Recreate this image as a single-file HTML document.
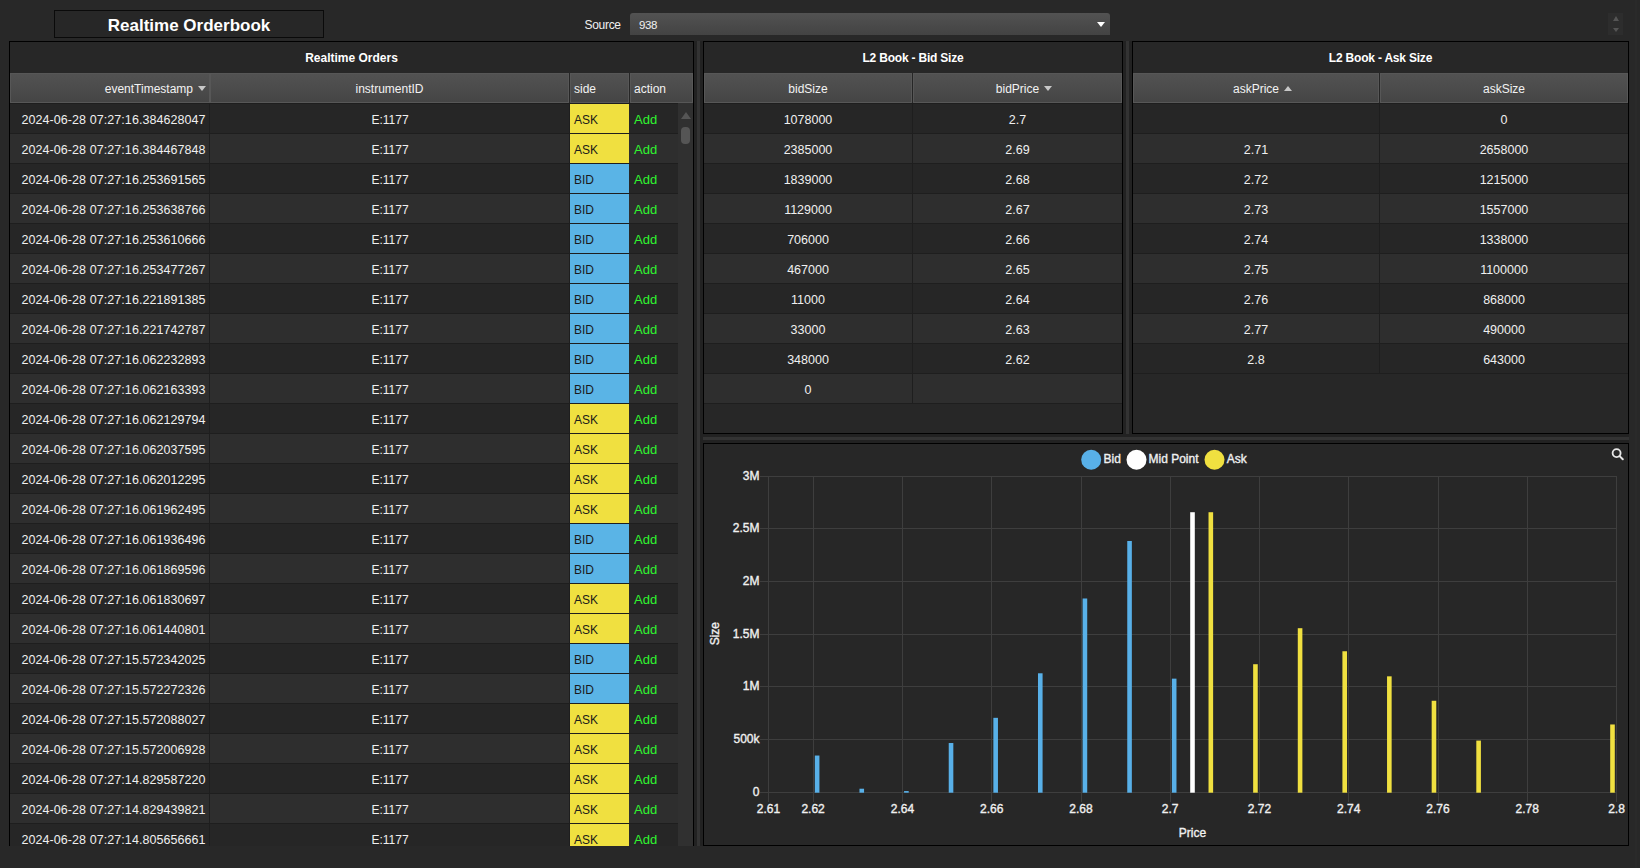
<!DOCTYPE html><html><head><meta charset="utf-8"><style>*{margin:0;padding:0;box-sizing:border-box}
html,body{width:1640px;height:868px;overflow:hidden;background:#282828;font-family:"Liberation Sans",sans-serif;color:#f2f2f2;position:relative}
div,i{position:absolute;display:block}
i{font-style:normal}
.titlebox{left:54px;top:10px;width:270px;height:28px;border:1px solid #0a0a0a;background:#272727;text-align:center;font-weight:bold;font-size:17px;line-height:26px;color:#fff}
.titlebox span{position:relative;top:2px}
.srclabel{left:584.5px;top:16px;font-size:12px;line-height:18px;color:#f0f0f0;letter-spacing:-0.3px}
.dropdown{left:630px;top:13px;width:480px;height:22px;border-radius:3px 3px 0 0;background:linear-gradient(#525252,#434343)}
.dropdown span{position:absolute;left:9px;top:4px;font-size:11.5px;line-height:16px;color:#f0f0f0;letter-spacing:-0.4px}
.ddarrow{left:467px;top:9px;width:0;height:0;border-left:4px solid transparent;border-right:4px solid transparent;border-top:5px solid #fff}
.spinner{left:1608px;top:13px;width:15px;height:22px;background:#2d2d2d}
.sup{left:4.5px;top:3px;width:0;height:0;border-left:3.5px solid transparent;border-right:3.5px solid transparent;border-bottom:5px solid #555}
.sdn{left:4.5px;top:15px;width:0;height:0;border-left:3.5px solid transparent;border-right:3.5px solid transparent;border-top:4px solid #555}
.farline{left:1635px;top:0;width:2px;height:868px;background:#2a2a2a}
.vstrip{width:3px;background:#333}
.hstrip{height:3px;background:#333}
.panel{border:1px solid #000;background:#272727;overflow:hidden;box-sizing:content-box}
.ptitle{left:0;top:0;width:100%;height:31px;text-align:center;font-weight:bold;font-size:12px;line-height:32px;color:#fff}
.hdr{left:0;width:100%;height:30px;background:#262626}
.hc{top:0;height:30px;border:1px solid #575757;background:linear-gradient(#525252,#454545);font-size:12px;line-height:31px;color:#f2f2f2;white-space:nowrap}
.hc.c{text-align:center}
.hc.l{text-align:left;padding-left:3px}
.hc span{position:relative}
.body{left:0;height:1000px}
.row{left:0;width:100%;height:30px;border-top:1px solid #1e1e1e}
.row.odd{background:#262626}
.row.even{background:#2e2e2e}
.cell{top:0;height:29px;font-size:12.5px;line-height:32px;white-space:nowrap;color:#f0f0f0}
.cc{text-align:center;font-size:12.5px}
.ts{left:0;width:200px;padding-left:11.5px;letter-spacing:0.07px}
.inst{left:201px;width:359px;text-align:center;font-size:12px}
.side{left:560px;width:59px;padding-left:4px;color:#1a1a1a;font-size:12px}
.side.ask{background:#f0e040}
.side.bid{background:#5ab4e6}
.act{left:620px;width:48px;padding-left:4px;color:#30f530;font-size:13px}
.ts,.inst{border-right:1px solid #1e1e1e}
.vscroll{left:668px;top:61px;width:15px;height:800px;background:#303030}
.sbup{left:2.5px;top:9px;width:0;height:0;border-left:5px solid transparent;border-right:5px solid transparent;border-bottom:7px solid #555}
.thumb{left:3px;top:24px;width:9px;height:17px;border-radius:4px;background:#555}
.ct{font-family:"Liberation Sans",sans-serif;font-size:12px;fill:#f0f0f0;stroke:#f0f0f0;stroke-width:0.35px}
.sortd span::after,.sortu span::after{content:"";position:absolute;right:-12.5px;top:3.5px;width:0;height:0;border-left:4.5px solid transparent;border-right:4.5px solid transparent}
.sortd span::after{border-top:5px solid #c8c8c8}
.sortu span::after{border-bottom:5px solid #c8c8c8}
.hc.r{text-align:right;padding-right:16px}
.cc.d{border-right:1px solid #1e1e1e}
.ptitle.l2{letter-spacing:-0.2px}
.gut{background:#222}
.sep{left:0;width:100%;height:1px;background:#1e1e1e}
</style></head><body>
<div class="titlebox"><span>Realtime Orderbook</span></div>
<div class="srclabel">Source</div>
<div class="dropdown"><span>938</span><i class="ddarrow"></i></div>
<div class="spinner"><i class="sup"></i><i class="sdn"></i></div>
<div class="farline"></div>
<div class="gut" style="left:694px;top:41px;width:9px;height:805px"></div>
<div class="gut" style="left:1123px;top:41px;width:9px;height:393px"></div>
<div class="gut" style="left:703px;top:434px;width:926px;height:9px"></div>
<div class="vstrip" style="left:697px;top:41px;height:805px"></div>
<div class="vstrip" style="left:1126px;top:41px;height:393px"></div>
<div class="hstrip" style="left:703px;top:437px;width:926px"></div>
<div class="clip" style="left:0;top:0;width:700px;height:846px;overflow:hidden">
<div class="panel" style="left:9px;top:41px;width:683px;height:820px">
<div class="ptitle">Realtime Orders</div>
<div class="hdr" style="top:31px">
<div class="hc r sortd" style="left:0px;width:200px"><span>eventTimestamp</span></div>
<div class="hc c" style="left:200px;width:359px"><span>instrumentID</span></div>
<div class="hc l" style="left:560px;width:59px"><span>side</span></div>
<div class="hc l" style="left:620px;width:63px"><span>action</span></div>
</div>
<div class="body" style="top:61px;width:668px">
<div class="row odd" style="top:0px"><div class="cell ts">2024-06-28 07:27:16.384628047</div><div class="cell inst">E:1177</div><div class="cell side ask">ASK</div><div class="cell act">Add</div></div>
<div class="row even" style="top:30px"><div class="cell ts">2024-06-28 07:27:16.384467848</div><div class="cell inst">E:1177</div><div class="cell side ask">ASK</div><div class="cell act">Add</div></div>
<div class="row odd" style="top:60px"><div class="cell ts">2024-06-28 07:27:16.253691565</div><div class="cell inst">E:1177</div><div class="cell side bid">BID</div><div class="cell act">Add</div></div>
<div class="row even" style="top:90px"><div class="cell ts">2024-06-28 07:27:16.253638766</div><div class="cell inst">E:1177</div><div class="cell side bid">BID</div><div class="cell act">Add</div></div>
<div class="row odd" style="top:120px"><div class="cell ts">2024-06-28 07:27:16.253610666</div><div class="cell inst">E:1177</div><div class="cell side bid">BID</div><div class="cell act">Add</div></div>
<div class="row even" style="top:150px"><div class="cell ts">2024-06-28 07:27:16.253477267</div><div class="cell inst">E:1177</div><div class="cell side bid">BID</div><div class="cell act">Add</div></div>
<div class="row odd" style="top:180px"><div class="cell ts">2024-06-28 07:27:16.221891385</div><div class="cell inst">E:1177</div><div class="cell side bid">BID</div><div class="cell act">Add</div></div>
<div class="row even" style="top:210px"><div class="cell ts">2024-06-28 07:27:16.221742787</div><div class="cell inst">E:1177</div><div class="cell side bid">BID</div><div class="cell act">Add</div></div>
<div class="row odd" style="top:240px"><div class="cell ts">2024-06-28 07:27:16.062232893</div><div class="cell inst">E:1177</div><div class="cell side bid">BID</div><div class="cell act">Add</div></div>
<div class="row even" style="top:270px"><div class="cell ts">2024-06-28 07:27:16.062163393</div><div class="cell inst">E:1177</div><div class="cell side bid">BID</div><div class="cell act">Add</div></div>
<div class="row odd" style="top:300px"><div class="cell ts">2024-06-28 07:27:16.062129794</div><div class="cell inst">E:1177</div><div class="cell side ask">ASK</div><div class="cell act">Add</div></div>
<div class="row even" style="top:330px"><div class="cell ts">2024-06-28 07:27:16.062037595</div><div class="cell inst">E:1177</div><div class="cell side ask">ASK</div><div class="cell act">Add</div></div>
<div class="row odd" style="top:360px"><div class="cell ts">2024-06-28 07:27:16.062012295</div><div class="cell inst">E:1177</div><div class="cell side ask">ASK</div><div class="cell act">Add</div></div>
<div class="row even" style="top:390px"><div class="cell ts">2024-06-28 07:27:16.061962495</div><div class="cell inst">E:1177</div><div class="cell side ask">ASK</div><div class="cell act">Add</div></div>
<div class="row odd" style="top:420px"><div class="cell ts">2024-06-28 07:27:16.061936496</div><div class="cell inst">E:1177</div><div class="cell side bid">BID</div><div class="cell act">Add</div></div>
<div class="row even" style="top:450px"><div class="cell ts">2024-06-28 07:27:16.061869596</div><div class="cell inst">E:1177</div><div class="cell side bid">BID</div><div class="cell act">Add</div></div>
<div class="row odd" style="top:480px"><div class="cell ts">2024-06-28 07:27:16.061830697</div><div class="cell inst">E:1177</div><div class="cell side ask">ASK</div><div class="cell act">Add</div></div>
<div class="row even" style="top:510px"><div class="cell ts">2024-06-28 07:27:16.061440801</div><div class="cell inst">E:1177</div><div class="cell side ask">ASK</div><div class="cell act">Add</div></div>
<div class="row odd" style="top:540px"><div class="cell ts">2024-06-28 07:27:15.572342025</div><div class="cell inst">E:1177</div><div class="cell side bid">BID</div><div class="cell act">Add</div></div>
<div class="row even" style="top:570px"><div class="cell ts">2024-06-28 07:27:15.572272326</div><div class="cell inst">E:1177</div><div class="cell side bid">BID</div><div class="cell act">Add</div></div>
<div class="row odd" style="top:600px"><div class="cell ts">2024-06-28 07:27:15.572088027</div><div class="cell inst">E:1177</div><div class="cell side ask">ASK</div><div class="cell act">Add</div></div>
<div class="row even" style="top:630px"><div class="cell ts">2024-06-28 07:27:15.572006928</div><div class="cell inst">E:1177</div><div class="cell side ask">ASK</div><div class="cell act">Add</div></div>
<div class="row odd" style="top:660px"><div class="cell ts">2024-06-28 07:27:14.829587220</div><div class="cell inst">E:1177</div><div class="cell side ask">ASK</div><div class="cell act">Add</div></div>
<div class="row even" style="top:690px"><div class="cell ts">2024-06-28 07:27:14.829439821</div><div class="cell inst">E:1177</div><div class="cell side ask">ASK</div><div class="cell act">Add</div></div>
<div class="row odd" style="top:720px"><div class="cell ts">2024-06-28 07:27:14.805656661</div><div class="cell inst">E:1177</div><div class="cell side ask">ASK</div><div class="cell act">Add</div></div>
</div>
<div class="vscroll"><i class="sbup"></i><i class="thumb"></i></div>
</div></div>
<div class="panel" style="left:703px;top:41px;width:418px;height:391px">
<div class="ptitle l2">L2 Book - Bid Size</div>
<div class="hdr" style="top:31px">
<div class="hc c" style="left:0;width:208px"><span>bidSize</span></div>
<div class="hc c sortd" style="left:209px;width:209px"><span>bidPrice</span></div>
</div>
<div class="body" style="top:61px;width:418px">
<div class="row odd" style="top:0px"><div class="cell cc d" style="left:0;width:209px">1078000</div><div class="cell cc" style="left:209px;width:209px">2.7</div></div>
<div class="row even" style="top:30px"><div class="cell cc d" style="left:0;width:209px">2385000</div><div class="cell cc" style="left:209px;width:209px">2.69</div></div>
<div class="row odd" style="top:60px"><div class="cell cc d" style="left:0;width:209px">1839000</div><div class="cell cc" style="left:209px;width:209px">2.68</div></div>
<div class="row even" style="top:90px"><div class="cell cc d" style="left:0;width:209px">1129000</div><div class="cell cc" style="left:209px;width:209px">2.67</div></div>
<div class="row odd" style="top:120px"><div class="cell cc d" style="left:0;width:209px">706000</div><div class="cell cc" style="left:209px;width:209px">2.66</div></div>
<div class="row even" style="top:150px"><div class="cell cc d" style="left:0;width:209px">467000</div><div class="cell cc" style="left:209px;width:209px">2.65</div></div>
<div class="row odd" style="top:180px"><div class="cell cc d" style="left:0;width:209px">11000</div><div class="cell cc" style="left:209px;width:209px">2.64</div></div>
<div class="row even" style="top:210px"><div class="cell cc d" style="left:0;width:209px">33000</div><div class="cell cc" style="left:209px;width:209px">2.63</div></div>
<div class="row odd" style="top:240px"><div class="cell cc d" style="left:0;width:209px">348000</div><div class="cell cc" style="left:209px;width:209px">2.62</div></div>
<div class="row even" style="top:270px"><div class="cell cc d" style="left:0;width:209px">0</div><div class="cell cc" style="left:209px;width:209px"></div></div>
<div class="sep" style="top:300px"></div>
</div></div>
<div class="panel" style="left:1132px;top:41px;width:495px;height:391px">
<div class="ptitle l2">L2 Book - Ask Size</div>
<div class="hdr" style="top:31px">
<div class="hc c sortu" style="left:0;width:246px"><span>askPrice</span></div>
<div class="hc c" style="left:247px;width:248px"><span>askSize</span></div>
</div>
<div class="body" style="top:61px;width:495px">
<div class="row odd" style="top:0px"><div class="cell cc d" style="left:0;width:247px"></div><div class="cell cc" style="left:247px;width:248px">0</div></div>
<div class="row even" style="top:30px"><div class="cell cc d" style="left:0;width:247px">2.71</div><div class="cell cc" style="left:247px;width:248px">2658000</div></div>
<div class="row odd" style="top:60px"><div class="cell cc d" style="left:0;width:247px">2.72</div><div class="cell cc" style="left:247px;width:248px">1215000</div></div>
<div class="row even" style="top:90px"><div class="cell cc d" style="left:0;width:247px">2.73</div><div class="cell cc" style="left:247px;width:248px">1557000</div></div>
<div class="row odd" style="top:120px"><div class="cell cc d" style="left:0;width:247px">2.74</div><div class="cell cc" style="left:247px;width:248px">1338000</div></div>
<div class="row even" style="top:150px"><div class="cell cc d" style="left:0;width:247px">2.75</div><div class="cell cc" style="left:247px;width:248px">1100000</div></div>
<div class="row odd" style="top:180px"><div class="cell cc d" style="left:0;width:247px">2.76</div><div class="cell cc" style="left:247px;width:248px">868000</div></div>
<div class="row even" style="top:210px"><div class="cell cc d" style="left:0;width:247px">2.77</div><div class="cell cc" style="left:247px;width:248px">490000</div></div>
<div class="row odd" style="top:240px"><div class="cell cc d" style="left:0;width:247px">2.8</div><div class="cell cc" style="left:247px;width:248px">643000</div></div>
<div class="sep" style="top:270px"></div>
</div></div>
<div class="panel" style="left:703px;top:443px;width:924px;height:401px"></div>
<svg style="position:absolute;left:0;top:0" width="1640" height="868">
<rect x="760" y="792" width="857" height="1" fill="#3e3e3e"/>
<rect x="760" y="739" width="857" height="1" fill="#3e3e3e"/>
<rect x="760" y="686" width="857" height="1" fill="#3e3e3e"/>
<rect x="760" y="634" width="857" height="1" fill="#3e3e3e"/>
<rect x="760" y="581" width="857" height="1" fill="#3e3e3e"/>
<rect x="760" y="528" width="857" height="1" fill="#3e3e3e"/>
<rect x="760" y="476" width="857" height="1" fill="#3e3e3e"/>
<rect x="768" y="476" width="1" height="326" fill="#3e3e3e"/>
<rect x="813" y="476" width="1" height="326" fill="#3e3e3e"/>
<rect x="902" y="476" width="1" height="326" fill="#3e3e3e"/>
<rect x="991" y="476" width="1" height="326" fill="#3e3e3e"/>
<rect x="1081" y="476" width="1" height="326" fill="#3e3e3e"/>
<rect x="1170" y="476" width="1" height="326" fill="#3e3e3e"/>
<rect x="1259" y="476" width="1" height="326" fill="#3e3e3e"/>
<rect x="1348" y="476" width="1" height="326" fill="#3e3e3e"/>
<rect x="1438" y="476" width="1" height="326" fill="#3e3e3e"/>
<rect x="1527" y="476" width="1" height="326" fill="#3e3e3e"/>
<rect x="1616" y="476" width="1" height="326" fill="#3e3e3e"/>
<text x="759.5" y="795.7" text-anchor="end" class="ct">0</text>
<text x="759.5" y="742.7" text-anchor="end" class="ct">500k</text>
<text x="759.5" y="689.7" text-anchor="end" class="ct">1M</text>
<text x="759.5" y="637.7" text-anchor="end" class="ct">1.5M</text>
<text x="759.5" y="584.7" text-anchor="end" class="ct">2M</text>
<text x="759.5" y="531.7" text-anchor="end" class="ct">2.5M</text>
<text x="759.5" y="479.7" text-anchor="end" class="ct">3M</text>
<text x="768.5" y="813" text-anchor="middle" class="ct">2.61</text>
<text x="813.1" y="813" text-anchor="middle" class="ct">2.62</text>
<text x="902.4" y="813" text-anchor="middle" class="ct">2.64</text>
<text x="991.7" y="813" text-anchor="middle" class="ct">2.66</text>
<text x="1080.9" y="813" text-anchor="middle" class="ct">2.68</text>
<text x="1170.2" y="813" text-anchor="middle" class="ct">2.7</text>
<text x="1259.4" y="813" text-anchor="middle" class="ct">2.72</text>
<text x="1348.7" y="813" text-anchor="middle" class="ct">2.74</text>
<text x="1438.0" y="813" text-anchor="middle" class="ct">2.76</text>
<text x="1527.2" y="813" text-anchor="middle" class="ct">2.78</text>
<text x="1616.5" y="813" text-anchor="middle" class="ct">2.8</text>
<text x="1192.5" y="837" text-anchor="middle" class="ct">Price</text>
<text transform="translate(718.8,633.7) rotate(-90)" x="0" y="0" text-anchor="middle" class="ct">Size</text>
<rect x="814.83" y="755.54" width="4.6" height="37.16" fill="#58b0e8"/>
<rect x="859.46" y="788.72" width="4.6" height="3.98" fill="#58b0e8"/>
<rect x="904.09" y="791.04" width="4.6" height="1.66" fill="#58b0e8"/>
<rect x="948.73" y="743.01" width="4.6" height="49.69" fill="#58b0e8"/>
<rect x="993.36" y="717.83" width="4.6" height="74.87" fill="#58b0e8"/>
<rect x="1037.99" y="673.28" width="4.6" height="119.42" fill="#58b0e8"/>
<rect x="1082.62" y="598.49" width="4.6" height="194.21" fill="#58b0e8"/>
<rect x="1127.25" y="540.98" width="4.6" height="251.72" fill="#58b0e8"/>
<rect x="1171.88" y="678.65" width="4.6" height="114.05" fill="#58b0e8"/>
<rect x="1190.20" y="512.22" width="4.6" height="280.48" fill="#ffffff"/>
<rect x="1208.52" y="512.22" width="4.6" height="280.48" fill="#f0e040"/>
<rect x="1253.15" y="664.22" width="4.6" height="128.48" fill="#f0e040"/>
<rect x="1297.78" y="628.20" width="4.6" height="164.50" fill="#f0e040"/>
<rect x="1342.41" y="651.26" width="4.6" height="141.44" fill="#f0e040"/>
<rect x="1387.04" y="676.33" width="4.6" height="116.37" fill="#f0e040"/>
<rect x="1431.67" y="700.77" width="4.6" height="91.93" fill="#f0e040"/>
<rect x="1476.31" y="740.59" width="4.6" height="52.11" fill="#f0e040"/>
<rect x="1610.20" y="724.47" width="4.6" height="68.23" fill="#f0e040"/>
<circle cx="1091.2" cy="459.8" r="10" fill="#58b0e8"/>
<text x="1103.5" y="463" class="ct">Bid</text>
<circle cx="1136.5" cy="459.8" r="10" fill="#ffffff"/>
<text x="1148.5" y="463" class="ct">Mid Point</text>
<circle cx="1214.5" cy="459.8" r="10" fill="#f0e040"/>
<text x="1226.7" y="463" class="ct">Ask</text>
<circle cx="1616.6" cy="453.1" r="4" fill="none" stroke="#e8e8e8" stroke-width="1.8"/>
<line x1="1619.6" y1="456.1" x2="1622.8" y2="459.3" stroke="#e8e8e8" stroke-width="2" stroke-linecap="round"/>
</svg>
</body></html>
